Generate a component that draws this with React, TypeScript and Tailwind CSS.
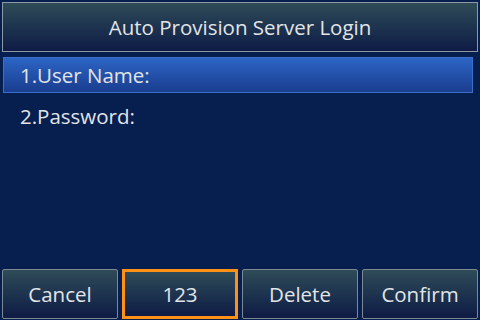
export default function App() {
  const keys = ['Cancel', '123', 'Delete', 'Confirm']

  return (
    <div
      className="w-[480px] h-[320px] bg-[#061f4f] flex flex-col text-[#e2e4e6] overflow-hidden"
      style={{ fontFamily: '"Open Sans", sans-serif' }}
    >
      {/* Title */}
      <div className="mx-[2px] mt-[2px] h-[50px] border border-[#8d99a3] bg-gradient-to-b from-[#2f4b57] to-[#0f1b45] flex items-center justify-center text-[20.5px]">
        Auto Provision Server Login
      </div>

      {/* Items */}
      <div className="mt-[5px] flex flex-col">
        <div className="ml-[3px] w-[470px] h-[36px] border border-[#3c70c8] bg-gradient-to-b from-[#2c65c5] to-[#1a3d8f] flex items-center pl-[16px] text-[20.5px]">
          1.User Name:
        </div>
        <div className="ml-[3px] h-[46px] flex items-center pl-[17px] text-[20.5px]">
          2.Password:
        </div>
      </div>

      {/* Softkeys */}
      <div className="mt-auto mb-[1px] mx-[2px] flex gap-[4px]">
        {keys.map((k) => (
          <div
            key={k}
            className={
              k === '123'
                ? 'w-[116px] h-[50px] border-[3px] border-[#ff9117] bg-gradient-to-b from-[#2f4b57] to-[#0f1b45] flex items-center justify-center text-[20.5px]'
                : 'w-[116px] h-[50px] border border-[#7d8993] rounded-[2px] bg-gradient-to-b from-[#2f4b57] to-[#0f1b45] flex items-center justify-center text-[20.5px]'
            }
          >
            {k}
          </div>
        ))}
      </div>
    </div>
  )
}
